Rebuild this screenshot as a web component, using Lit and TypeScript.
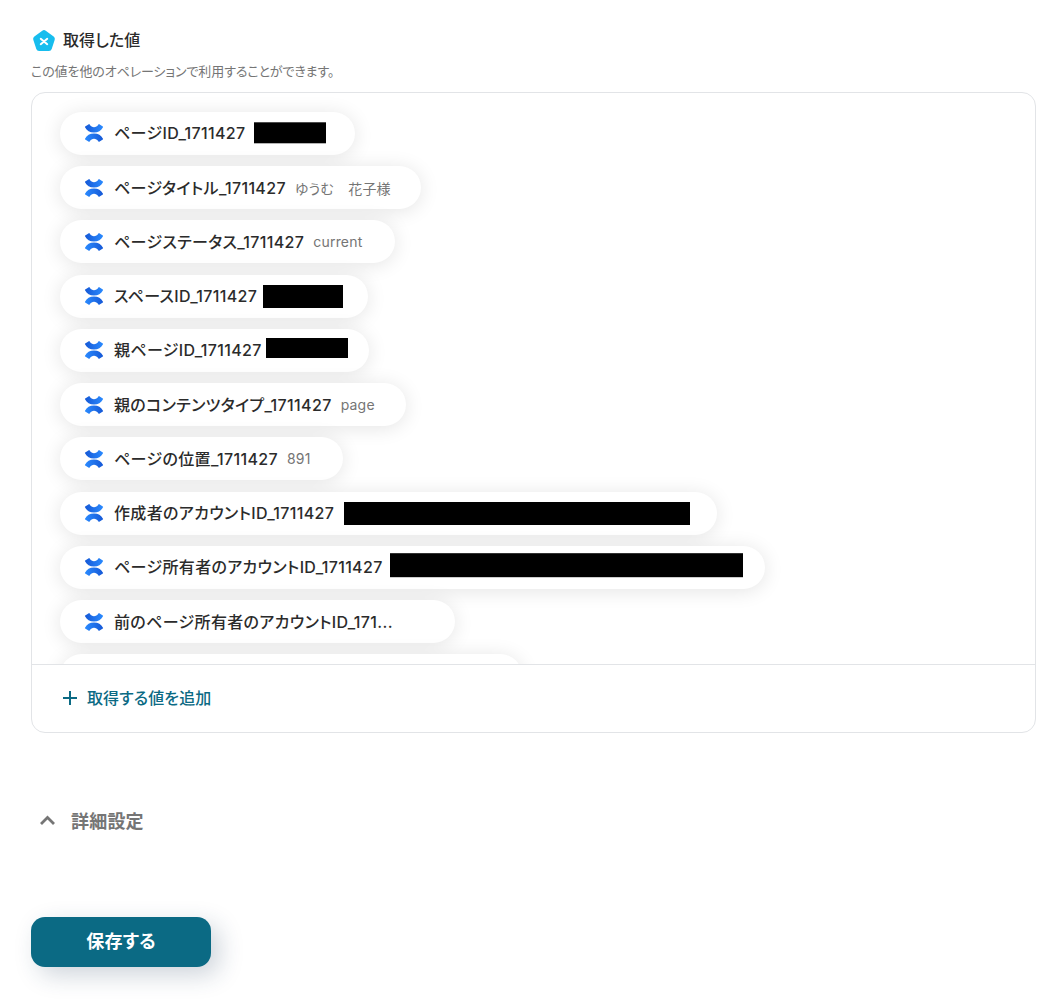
import { LitElement, html, css, svg } from "lit";
import { customElement } from "lit/decorators.js";

type Row = { label: string; value?: string; box?: [number, number, number, number]; w: number };

const rows: Row[] = [
  { label: "ページID_1711427", box: [72, 21, 9, -0.7], w: 295 },
  { label: "ページタイトル_1711427", value: "ゆうむ　花子様", w: 361 },
  { label: "ページステータス_1711427", value: "current", w: 335 },
  { label: "スペースID_1711427", box: [80, 23, 6, 0], w: 308 },
  { label: "親ページID_1711427", box: [82, 20, 4, -2], w: 309 },
  { label: "親のコンテンツタイプ_1711427", value: "page", w: 346 },
  { label: "ページの位置_1711427", value: "891", w: 283 },
  { label: "作成者のアカウントID_1711427", box: [346, 23, 10, 0], w: 657 },
  { label: "ページ所有者のアカウントID_1711427", box: [353, 24, 7, -1.8], w: 705 },
  { label: "前のページ所有者のアカウントID_171...", w: 395 },
  { label: "", w: 462 },
];

const confluence = svg`<svg class="conf" viewBox="0 0 20 20" width="20" height="20" aria-hidden="true">
  <defs>
    <linearGradient id="c1" x1="0" y1="0" x2="1" y2="0"><stop offset="0" stop-color="#1558d6"/><stop offset="1" stop-color="#2b8bff"/></linearGradient>
    <linearGradient id="c2" x1="0" y1="0" x2="1" y2="0"><stop offset="0" stop-color="#2b8bff"/><stop offset="1" stop-color="#1558d6"/></linearGradient>
  </defs>
  <path fill="url(#c1)" d="M1.200 3.400 4.800 1.200c.3-.2.6-.1.8.2C6.900 3.200 8.300 4.200 10 4.200s3.200-1 4.500-2.800c.2-.3.5-.4.8-.2l3.500 2.200c.3.2.4.5.2.8C17.200 7.800 14.200 9.600 10 9.600S2.800 7.800 1 4.200c-.2-.3-.1-.6.2-.8Z"/>
  <path fill="url(#c2)" d="M1.200 16.600 4.800 18.800c.3.200.6.100.8-.2C6.900 16.800 8.300 15.800 10 15.800s3.200 1 4.500 2.800c.2.300.5.400.8.200l3.500-2.200c.3-.2.400-.5.200-.8C17.200 12.200 14.200 10.400 10 10.400S2.800 12.200 1 15.800c-.2.300-.1.600.2.800Z"/>
</svg>`;

@customElement("app-root")
export class AppRoot extends LitElement {
  static styles = css`
    :host {
      display: block;
      background: #fff;
      height: 1003px;
      overflow: hidden;
      font-family: Inter, "Noto Sans CJK JP", sans-serif;
      font-feature-settings: "palt";
      color: #2b2b2b;
    }
    .page { padding: 26px 26px 0 31px; }
    .title { display: flex; align-items: center; gap: 6px; height: 26px; }
    .title svg { margin-top: 4px; flex: none; }
    .title h2 { margin: 0; font-size: 16px; font-weight: 500; color: #2b2b2b; letter-spacing: 0.1px; }
    .desc { margin: 11px 0 0; font-size: 13px; line-height: 16px; color: #757575; letter-spacing: -0.1px; }
    .box {
      margin-top: 13px;
      height: 641px;
      box-sizing: border-box;
      border: 1px solid #e2e4e7;
      border-radius: 14px;
      display: flex;
      flex-direction: column;
      overflow: hidden;
    }
    .list {
      height: 571px;
      flex: none;
      overflow: hidden;
      box-sizing: border-box;
      padding: 18.8px 0 0 28px;
      display: flex;
      flex-direction: column;
      gap: 11.25px;
      align-items: flex-start;
    }
    .pill {
      flex: none;
      height: 43px;
      box-sizing: border-box;
      border-radius: 22px;
      background: #fff;
      box-shadow: 0 2px 20px rgba(0, 0, 0, 0.11);
      display: flex;
      align-items: center;
      padding-left: 24px;
      white-space: nowrap;
    }
    .conf { flex: none; margin-right: 10px; }
    .label { font-size: 16px; font-weight: 500; color: #2b2b2b; line-height: 20px; letter-spacing: 0.35px; }
    .value { margin-left: 9px; font-size: 14px; color: #757575; letter-spacing: 0.2px; }
    .mask { background: #000; flex: none; }
    .foot {
      flex: 1;
      border-top: 1px solid #e2e4e7;
      display: flex;
      align-items: center;
      padding-left: 30px;
      gap: 9px;
      color: #0b6a84;
      font-size: 16px;
      font-weight: 500;
      letter-spacing: 0.1px;
    }
    .foot span { padding-bottom: 3px; }
    .foot svg { padding-bottom: 2px; }
    .adv {
      margin-top: 72px;
      height: 30px;
      display: flex;
      align-items: center;
      gap: 15px;
      padding-left: 8px;
      color: #757575;
      font-size: 18px;
      font-weight: 700;
      letter-spacing: 0.2px;
    }
    .save {
      margin-top: 82px;
      display: block;
      width: 180px;
      height: 50px;
      border: 0;
      border-radius: 14px;
      background: #0b6a84;
      color: #fff;
      font: 700 18px Inter, "Noto Sans CJK JP", sans-serif;
      font-feature-settings: "palt";
      letter-spacing: 0.2px;
      padding: 0 0 4px;
      box-shadow: 8px 8px 24px rgba(30, 60, 90, 0.22);
    }
  `;

  render() {
    return html`<div class="page">
      <div class="title">
        <svg width="26" height="26" viewBox="0 0 24 24" aria-hidden="true">
          <path fill="#17bdee" d="M10.400 2.500a2.700 2.700 0 0 1 3.200 0l7.300 5.300a2.700 2.700 0 0 1 1 3l-2.800 8.600a2.700 2.700 0 0 1-2.600 1.900H7.500a2.700 2.700 0 0 1-2.600-1.900L2.100 10.800a2.700 2.700 0 0 1 1-3Z"/>
          <path stroke="#fff" stroke-width="1.800" stroke-linecap="round" fill="none" d="M9 10l6 5M15 10l-6 5"/>
        </svg>
        <h2>取得した値</h2>
      </div>
      <p class="desc">この値を他のオペレーションで利用することができます。</p>
      <div class="box">
        <div class="list">
          ${rows.map(
            (r) => html`<div class="pill" style="width:${r.w}px">
              ${r.label ? confluence : ""}
              <span class="label">${r.label}</span>
              ${r.value ? html`<span class="value">${r.value}</span>` : ""}
              ${r.box
                ? html`<span
                    class="mask"
                    style="width:${r.box[0]}px;height:${r.box[1]}px;margin-left:${r.box[2]}px;transform:translateY(${r.box[3]}px)"
                  ></span>`
                : ""}
            </div>`
          )}
        </div>
        <div class="foot">
          <svg width="16" height="16" viewBox="0 0 16 16" aria-hidden="true"><path d="M8 1v14M1 8h14" stroke="#0b6a84" stroke-width="2" fill="none"/></svg>
          <span>取得する値を追加</span>
        </div>
      </div>
      <div class="adv">
        <svg width="17" height="11" viewBox="0 0 17 11" aria-hidden="true"><path d="M2 9l6.500-6.500L15 9" stroke="#757575" stroke-width="2.800" fill="none"/></svg>
        <span>詳細設定</span>
      </div>
      <button class="save">保存する</button>
    </div>`;
  }
}
